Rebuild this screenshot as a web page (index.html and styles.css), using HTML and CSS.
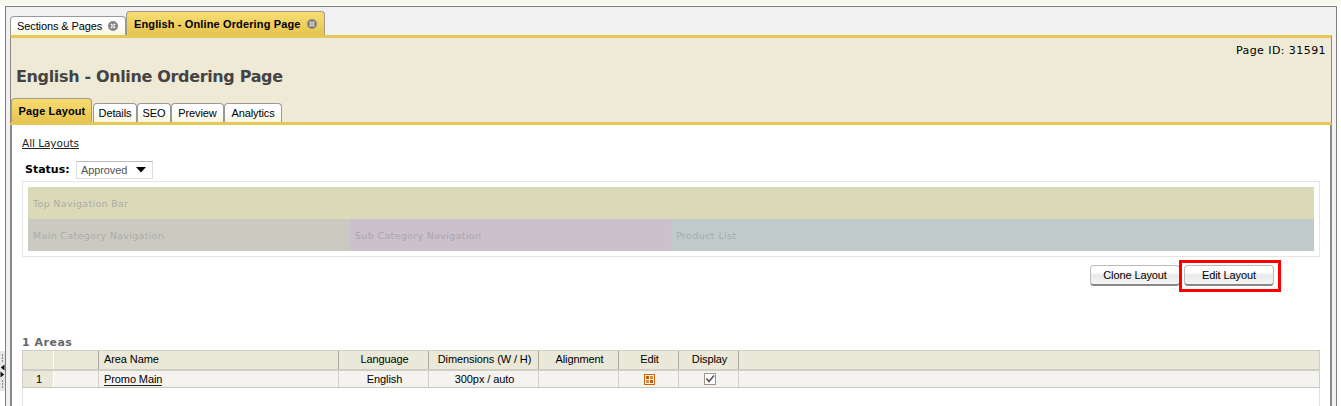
FILE: index.html
```html
<!DOCTYPE html>
<html lang="en">
<head>
<meta charset="utf-8">
<title>English - Online Ordering Page</title>
<link rel="stylesheet" href="styles.css">
</head>
<body>
<div class="topstrip"></div>
<div class="shell">
  <aside class="gutter">
    <svg class="splitter" width="5" height="40" viewBox="0 0 5 40"><rect width="5" height="40" fill="#e6e6e6"/><path d="M2.5 3v8M2.5 29v9" stroke="#888" stroke-dasharray="2 1"/><path d="M4.5 13.5v6L.8 16.5zM.5 20.500v6l3.700-3z" fill="#111"/></svg>
  </aside>
  <main class="frame">
    <nav class="tabs outer-tabs">
      <a class="tab pages-tab"><span>Sections &amp; Pages</span><svg class="close" width="10" height="10" viewBox="0 0 10 10"><circle cx="5" cy="5" r="5" fill="#858585"/><path d="M3 3l4 4M7 3L3 7" stroke="#fff" stroke-width="1.5"/><rect x="4.3" y="4.3" width="1.4" height="1.4" fill="#858585"/></svg></a>
      <a class="tab active ordering-tab"><span>English - Online Ordering Page</span><svg class="close" width="10" height="10" viewBox="0 0 10 10"><circle cx="5" cy="5" r="5" fill="#858585"/><path d="M3 3l4 4M7 3L3 7" stroke="#f7efd0" stroke-width="1.5"/><rect x="4.3" y="4.3" width="1.4" height="1.4" fill="#858585"/></svg></a>
    </nav>
    <header class="head">
      <div class="page-id">Page ID: 31591</div>
      <h1>English - Online Ordering Page</h1>
      <nav class="tabs inner-tabs">
        <a class="tab active layout-tab">Page Layout</a>
        <a class="tab details-tab">Details</a>
        <a class="tab seo-tab">SEO</a>
        <a class="tab preview-tab">Preview</a>
        <a class="tab analytics-tab">Analytics</a>
      </nav>
    </header>
    <section class="body">
      <div class="links"><a class="all">All Layouts</a></div>
      <div class="status"><b>Status:</b><span class="select"><span>Approved</span><svg width="10" height="6" viewBox="0 0 10 6"><path d="M0 0h10L5 5.5z" fill="#000"/></svg></span></div>
      <div class="layout">
        <div class="area top-area">Top Navigation Bar</div>
        <div class="area-row">
          <div class="area main-area">Main Category Navigation</div>
          <div class="area sub-area">Sub Category Navigation</div>
          <div class="area product-area">Product List</div>
        </div>
      </div>
      <div class="actions"><button class="btn">Clone Layout</button><div class="highlight"><button class="btn">Edit Layout</button></div></div>
      <h2>1 Areas</h2>
      <div class="grid">
        <div class="row header"><div class="num"></div><div></div><div class="left">Area Name</div><div>Language</div><div>Dimensions (W / H)</div><div>Alignment</div><div>Edit</div><div>Display</div><div class="last"></div></div>
        <div class="row data"><div class="num">1</div><div></div><div class="left"><a>Promo Main</a></div><div>English</div><div>300px / auto</div><div></div>
          <div><svg width="11" height="11" viewBox="0 0 11 11"><rect x=".5" y=".5" width="10" height="10" fill="#fff3e3" stroke="#cc640b"/><path d="M2 2h3v3H2zM6 6h3v3H6z" fill="#bd5c13"/><path d="M6 2h3v3H6zM2 6h3v3H2z" fill="#da8a43"/></svg></div>
          <div><svg width="12" height="12" viewBox="0 0 12 12"><rect x=".5" y=".5" width="11" height="11" fill="#fff" stroke="#a39387"/><path d="M2.500 5.500l2.500 3 5-6" fill="none" stroke="#574c45" stroke-width="1.500"/></svg></div><div class="last"></div></div>
        <div class="rest"></div>
      </div>
    </section>
  </main>
</div>
</body>
</html>
```
FILE: styles.css
```css
* { box-sizing: border-box; }
body { margin: 0; height: 406px; overflow: hidden; background: #fff; font: 11px/14px "Liberation Sans", Arial, sans-serif; letter-spacing: -0.1px; color: #000; }
.topstrip { height: 5px; margin-bottom: 1px; background: #f8f8ee; }
.shell { display: flex; height: 400px; }
.gutter { width: 5px; padding-top: 345px; }
.splitter { display: block; }
.frame { width: 1332px; height: 401px; padding: 0 4px; border: 1px solid #808080; border-bottom: 0; background: #f1f1f1; }
.tabs { display: flex; align-items: flex-end; }
.tab { display: flex; align-items: center; justify-content: center; border: 1px solid #999; border-bottom: 0; border-radius: 4px 4px 0 0; background: linear-gradient(#fff 35%, #f6f5df); white-space: nowrap; }
.tab.active { font-weight: bold; letter-spacing: .13px; background: linear-gradient(#f8dd72, #e6c550); border-color: #a09a88; }
.outer-tabs { height: 28px; }
.outer-tabs .tab { justify-content: space-between; }
.pages-tab { width: 116px; height: 19px; padding: 0 7px 0 6px; }
.ordering-tab { width: 199px; height: 24px; padding: 1px 7px 0; }
.close { display: block; }
.head { height: 90px; border: 1px solid #888; border-width: 0 1px; border-top: 3px solid #e5c857; border-bottom: 3px solid #e5c857; background: #efead6; }
.page-id { height: 24px; padding: 6px 5px 0 0; text-align: right; font: 11px/14px "DejaVu Sans", Verdana, sans-serif; letter-spacing: .43px; }
h1 { height: 36px; margin: 0; padding: 5px 0 0 5px; font: bold 16px/20px "DejaVu Sans", Verdana, sans-serif; letter-spacing: -0.35px; color: #444; }
.inner-tabs { height: 24px; }
.inner-tabs .tab { height: 19px; }
.inner-tabs .layout-tab { width: 81px; height: 24px; margin-right: 1px; padding: 1px 0 0 1px; }
.inner-tabs .details-tab { width: 44px; }
.inner-tabs .seo-tab { width: 34px; }
.inner-tabs .preview-tab { width: 53px; }
.inner-tabs .analytics-tab { width: 58px; }
.body { height: 281px; padding: 11px 10px 0 10px; border: 2px solid #888; border-width: 0 2px; background: #fff; }
.links { height: 25px; }
.all { font: 10.5px/13px "DejaVu Sans", Verdana, sans-serif; letter-spacing: -.05px; text-decoration: underline; color: #222; }
.status { display: flex; height: 20px; padding-left: 3px; }
.status b { width: 51px; font: bold 11px/18px "DejaVu Sans", Verdana, sans-serif; letter-spacing: 0; }
.select { display: flex; align-items: center; justify-content: space-between; width: 77px; height: 18px; padding: 0 6px 0 4px; border: 1px solid #ddd; border-top-color: #bbb; color: #555; }
.layout { height: 76px; padding: 5px; border: 1px solid #e5e5e5; }
.area { height: 32px; padding-left: 5px; font: 9.5px/33px "DejaVu Sans", Verdana, sans-serif; letter-spacing: .33px; color: #acaca8; white-space: nowrap; }
.top-area { background: #dadab8; }
.area-row { display: flex; }
.main-area { width: 322px; background: #cacac0; }
.sub-area { width: 321px; background: #cbc0cc; color: #aba5ab; }
.product-area { flex: 1; background: #c0caca; color: #a4acac; letter-spacing: .42px; }
.actions { display: flex; justify-content: flex-end; height: 79px; padding: 3px 39px 0 0; }
.btn { width: 90px; height: 21px; padding: 0; border: 1px solid #bbb; border-bottom: 2px solid #888; border-radius: 4px; background: linear-gradient(#fff 35%, #e9e9e9 50%, #f5f5f5); font: inherit; letter-spacing: inherit; color: #000; }
.actions > .btn { margin-top: 5px; margin-right: -1px; }
.highlight { width: 102px; height: 32px; padding: 2px; border: 3px solid red; }
h2 { height: 14px; margin: 0; font: bold 11px/14px "DejaVu Sans", Verdana, sans-serif; letter-spacing: .5px; color: #666; }
.row { display: grid; grid-template-columns: 31px 45px 240px 90px 110px 80px 60px 60px 1fr; text-align: center; border: 1px solid #d0cdc2; border-width: 1px 1px 0 1px; }
.row > div { display: flex; align-items: center; justify-content: center; padding-left: 2px; border-right: 1px solid #aaa89f; }
.row > .num { border-right-color: #fff; background: #eae8d9; }
.row > .left { justify-content: flex-start; padding-left: 5px; }
.row > .last { border: 0; }
.header { height: 19px; background: #eae8d9; }
.header > div { padding-bottom: 2px; }
.data { height: 19px; border-top: 2px solid #d0cdc5; border-bottom: 1px solid #c9c6be; background: #f5f3ef; }
.data > div { border-color: #d0ccc6; }
.data a { line-height: 12px; border-bottom: 1px solid #222; }
.rest { height: 30px; border: 1px solid #e3e3e3; border-width: 0 1px; }
```
